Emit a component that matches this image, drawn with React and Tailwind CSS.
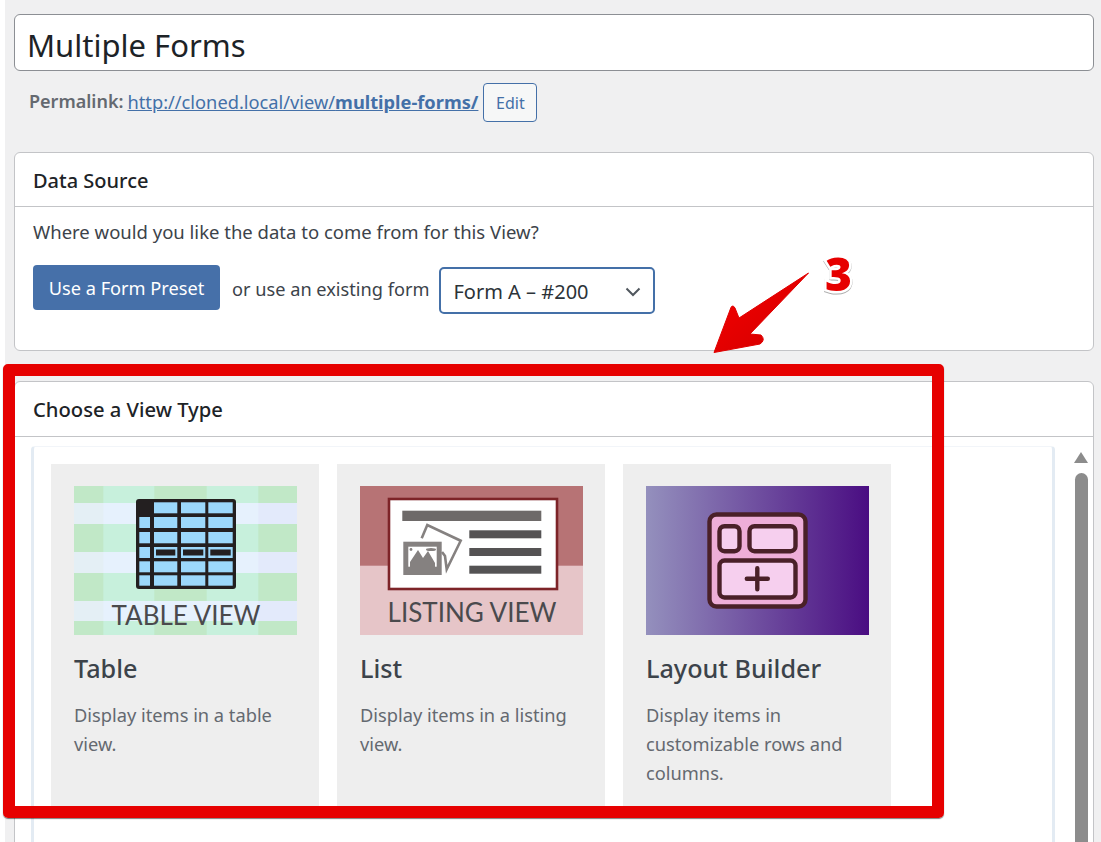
const FONT = "font-['Noto_Sans',sans-serif]"

function TableImage() {
  const cols = [[80, 23.3], [107, 24.3], [134.3, 24.4]]
  const rows = [[16.3, 11], [31, 11], [46, 11.3], [61, 11], [75.3, 11], [89.3, 10.4]]
  return (
    <svg viewBox="0 0 223 149" className="w-[223px] h-[149px] block">
      <rect width="223" height="149" fill="#c7f0dc" />
      <rect width="29.3" height="149" fill="#c1e8c7" />
      <rect x="80.3" width="52.4" height="149" fill="#c1e8c7" />
      <rect x="184.3" width="38.7" height="149" fill="#c1e8c7" />
      {[[17, 21], [66, 21], [115, 20]].map(([y, h]) => (
        <g key={y}>
          <rect y={y} width="223" height={h} fill="#e6f1fd" />
          <rect y={y} width="29.3" height={h} fill="#e4eff5" />
          <rect x="184.3" y={y} width="38.7" height={h} fill="#e3eafb" />
        </g>
      ))}
      <rect x="62" y="13" width="100" height="90" rx="3" fill="#231f20" />
      {rows.map(([y, h], i) => (
        <g key={y}>
          {i > 0 && <rect x="65.3" y={y} width="10.7" height={h} fill="#9cd8fb" />}
          {cols.map(([x, w]) => (
            <g key={x}>
              <rect x={x} y={y} width={w} height={h} fill="#9cd8fb" />
              {i === 3 && <rect x={x + 2} y={y + 2.5} width={w - 4} height={h - 5} fill="#231f20" />}
            </g>
          ))}
        </g>
      ))}
      <text x="112" y="139" textAnchor="middle" fontFamily="Lato, sans-serif" fontWeight="400" fontSize="26" fill="#4a4a4d">TABLE VIEW</text>
    </svg>
  )
}

function ListImage() {
  return (
    <svg viewBox="0 0 223 149" className="w-[223px] h-[149px] block">
      <rect width="223" height="149" fill="#e6c5c8" />
      <rect width="223" height="79.7" fill="#b77375" />
      <rect x="29" y="13" width="168" height="90" fill="#fff" stroke="#7d2428" strokeWidth="2.6" />
      <rect x="42.3" y="24.7" width="139" height="10.3" fill="#6e6a69" />
      <rect x="109.3" y="44.3" width="72" height="8" fill="#555354" />
      <rect x="109.3" y="62" width="72" height="8" fill="#555354" />
      <rect x="109.3" y="79.7" width="72" height="8" fill="#555354" />
      <path d="M61.700 52.300 L67.300 39 L100.700 54.700 L86.700 83.300 L85 70 L82 66" fill="#fff" stroke="#858180" strokeWidth="2.6" />
      <rect x="43.3" y="55.7" width="38.4" height="33.3" fill="#858180" />
      <rect x="48.3" y="60.7" width="28.4" height="20" fill="#fff" />
      <path d="M50 81 L50 76 L58 64 L63 72 L68 65 L75 77 L75 81 Z" fill="#858180" />
      <circle cx="51" cy="63.5" r="1.4" fill="#858180" />
      <ellipse cx="71" cy="63.5" rx="5" ry="1.5" fill="#858180" />
      <text x="112" y="136" textAnchor="middle" fontFamily="Lato, sans-serif" fontWeight="400" fontSize="26" fill="#4a4a4d">LISTING VIEW</text>
    </svg>
  )
}

function LayoutImage() {
  return (
    <svg viewBox="0 0 223 149" className="w-[223px] h-[149px] block">
      <defs>
        <linearGradient id="layoutBg" x1="0" x2="1" y1="0" y2="0">
          <stop offset="0" stopColor="#9490bd" />
          <stop offset="1" stopColor="#4a0d82" />
        </linearGradient>
      </defs>
      <rect width="223" height="149" fill="url(#layoutBg)" />
      <rect x="63.5" y="28.5" width="96" height="92" rx="7" fill="#eeaed8" stroke="#4a2028" strokeWidth="4.4" />
      <rect x="73.5" y="40.2" width="20" height="25" rx="5" fill="#f6cfee" stroke="#4a2028" strokeWidth="4.4" />
      <rect x="103.5" y="40.2" width="46" height="25" rx="5" fill="#f6cfee" stroke="#4a2028" strokeWidth="4.4" />
      <rect x="73.5" y="74.5" width="76" height="37" rx="5" fill="#f6cfee" stroke="#4a2028" strokeWidth="4.4" />
      <path d="M111.3 82.2 V103.2 M100.8 92.7 H121.8" stroke="#4a2028" strokeWidth="4.4" strokeLinecap="round" fill="none" />
    </svg>
  )
}

const VIEW_TYPES = [
  { title: 'Table', desc: 'Display items in a table view.', Image: TableImage },
  { title: 'List', desc: 'Display items in a listing view.', Image: ListImage },
  { title: 'Layout Builder', desc: 'Display items in customizable rows and columns.', Image: LayoutImage },
]

function ViewCard({ title, desc, Image }) {
  return (
    <div className="w-[268px] h-[346px] bg-[#eeeeee] pt-[22px] px-[23px]">
      <Image />
      <h3 className="mt-[15px] text-[25.2px] leading-[36px] font-medium text-[#3c434a]">{title}</h3>
      <p className="mt-[14px] text-[18.25px] leading-[29px] text-[#646970]">{desc}</p>
    </div>
  )
}

export default function App() {
  return (
    <div className={`relative flex w-full h-[842px] overflow-hidden bg-white ${FONT}`}>
      <div className="w-[5px] shrink-0" />
      <div className="flex-1 bg-[#f0f0f1] pl-[9px] pr-[7px] pt-[14px]">
        <div className="h-[57px] bg-white border border-[#8c8f94] rounded-[6px] pl-[12px] pt-[6px] flex items-center text-[31px] text-[#1d2327]">
          Multiple Forms
        </div>

        <div className="flex items-center h-[39px] mt-[12px] pl-[15px] text-[18.25px] text-[#646970]">
          <span className="font-semibold mr-[4px] mb-[2px] text-[18px]">Permalink:</span>
          <a className="mb-[2px] text-[#4470a8] underline">http://cloned.local/view/<b className="font-bold">multiple-forms/</b></a>
          <button className="ml-[5px] w-[54px] h-[39px] border border-[#4470a8] rounded-[4px] bg-[#f6f7f7] text-[#4470a8] text-[16px]">Edit</button>
        </div>

        <section className="mt-[30px] h-[199px] bg-white border border-[#c3c4c7] rounded-[6px]">
          <h2 className="h-[54px] flex items-center pl-[18px] pt-[2px] border-b border-[#c3c4c7] text-[20px] font-medium text-[#1d2327]">Data Source</h2>
          <div className="pl-[18px] pt-[10px]">
            <p className="text-[18.5px] leading-[29px] text-[#3c434a]">Where would you like the data to come from for this View?</p>
            <div className="flex items-center mt-[15px] text-[18.2px] text-[#3c434a]">
              <button className="w-[187px] h-[45px] pt-[3px] rounded-[4px] bg-[#4670a9] text-white">Use a Form Preset</button>
              <span className="ml-[12px] pt-[5px]">or use an existing form</span>
              <div className="ml-[10px] mt-[6px] w-[216px] h-[47px] border-2 border-[#4470a8] rounded-[5px] pl-[12px] pr-[12px] pt-[2px] flex items-center justify-between text-[20px] text-[#2c3338]">
                Form A – #200
                <svg viewBox="0 0 16 10" className="w-[16px] h-[10px]">
                  <path d="M1.5 1.5 L8 8 L14.5 1.5" fill="none" stroke="#50575e" strokeWidth="2" />
                </svg>
              </div>
            </div>
          </div>
        </section>

        <section className="mt-[30px] h-[500px] bg-white border border-[#c3c4c7] rounded-[6px]">
          <h2 className="h-[55px] flex items-center pl-[18px] border-b border-[#c3c4c7] text-[20.2px] font-medium text-[#1d2327]">Choose a View Type</h2>
          <div className="flex pl-[16px] pt-[9px]">
            <div className="w-[1024px] h-[420px] border-x-[3px] border-t border-x-[#e3ebf3] border-t-[#f2f5f9] rounded-t-[4px] pl-[17px] pt-[17px] flex gap-[18px]">
              {VIEW_TYPES.map((v) => <ViewCard key={v.title} {...v} />)}
            </div>
            <div className="ml-[19px] w-[14px] flex flex-col items-center pt-[6px]">
              <div className="w-0 h-0 border-x-[7.5px] border-x-transparent border-b-[11px] border-b-[#8c8c8c]" />
              <div className="w-[13px] h-[380px] mt-[10px] rounded-t-[7px] bg-[#8c8c8c]" />
            </div>
          </div>
        </section>
      </div>

      <div className="absolute left-[3px] top-[364px] w-[941px] h-[454px] border-[12px] border-[#e60000] rounded-[5px] shadow-[0_1px_1px_rgba(0,0,0,0.5)]" />
      <svg viewBox="0 -30 190 140" className="absolute left-[710px] top-[220px] w-[190px] h-[140px]">
        <defs>
          <linearGradient id="arrowRed" x1="0" x2="1" y1="0" y2="1">
            <stop offset="0" stopColor="#f80000" />
            <stop offset="1" stopColor="#cf0000" />
          </linearGradient>
        </defs>
        <path d="M98.5 23 L29 68 L25 58 Q22 53 20 60 L4 102.500 L50 94 Q56 90 51 85 L40 84 Z" fill="url(#arrowRed)" stroke="#e00000" strokeLinejoin="round" />
        <text x="115" y="41" fontFamily="'Open Sans', sans-serif" fontWeight="800" fontSize="46" fill="#e60000" stroke="#fff" strokeWidth="5" paintOrder="stroke" className="[filter:drop-shadow(0_1px_0_#aaaaaa)]">3</text>
      </svg>
    </div>
  )
}
